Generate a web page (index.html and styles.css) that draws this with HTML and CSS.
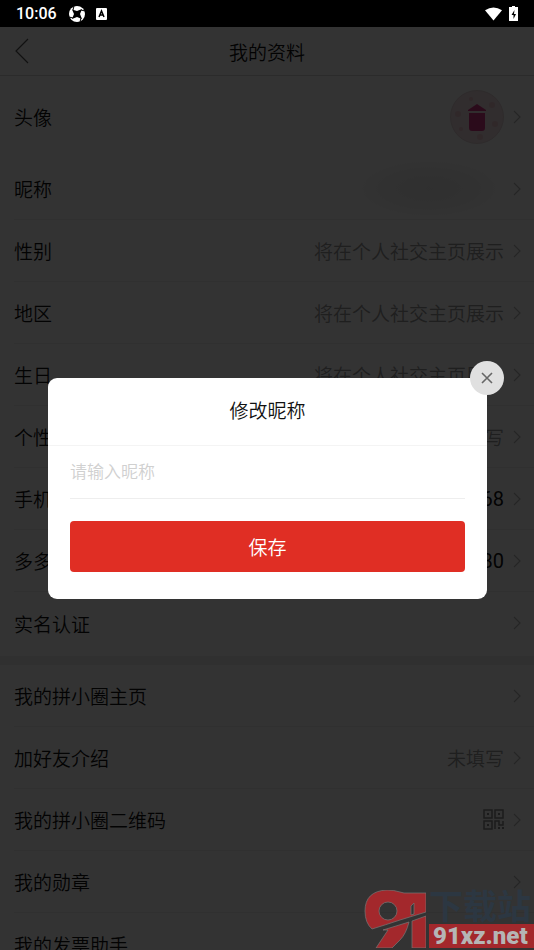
FILE: index.html
```html
<!DOCTYPE html>
<html lang="zh-CN">
<head>
<meta charset="utf-8">
<meta name="viewport" content="width=device-width, initial-scale=1">
<title>我的资料</title>
<link rel="stylesheet" href="styles.css">
</head>
<body>
<svg class="sprite" aria-hidden="true">
  <symbol id="chevron" viewBox="0 0 8 14"><path d="M1 1l6 6-6 6" fill="none" stroke="currentColor" stroke-width="1.2"/></symbol>
</svg>
<div class="status">
  <span class="time">10:06</span>
  <svg class="status-app" viewBox="0 0 16 16" aria-hidden="true"><circle cx="8" cy="8" r="8" fill="#fff"/><path d="M3 3.500L8 5l5-2-2 5 2 5-5-2-5 2 2-5z" fill="#000"/><path d="M5 0L4 4M16 5l-4-1M11 16l1-4M0 11l4 1" stroke="#000" stroke-width="1"/></svg>
  <svg class="status-a" viewBox="0 0 11 12" aria-hidden="true"><rect width="11" height="12" rx="1" fill="#fff"/><path d="M3 9l2.500-6L8 9M4 7h3" fill="none" stroke="#000" stroke-width="1.500"/></svg>
  <svg class="status-wifi" viewBox="0 0 18 14" aria-hidden="true"><path d="M0 3Q9-3 18 3L9 14z" fill="#fff"/></svg>
  <svg class="status-battery" viewBox="0 0 9 15" aria-hidden="true"><path d="M0 1h3V0h3v1h3v14H0z" fill="#fff"/><path d="M5.500 4L2.500 9h2v4l2.500-5H5z" fill="#000"/></svg>
</div>
<div class="screen">
  <header class="header">
    <button class="back" aria-label="返回"><svg viewBox="0 0 14 26"><path d="M13 1L1 13l12 12" fill="none" stroke="currentColor" stroke-width="1.200"/></svg></button>
    <h1>我的资料</h1>
  </header>
  <main>
    <ul class="group first">
      <li class="row avatar-row"><span class="label">头像</span>
        <svg class="avatar" viewBox="0 0 54 54" aria-hidden="true"><circle cx="27" cy="27" r="26.500" fill="#f3dfe3" stroke="#e4d4d7"/><g fill="#edc6ce"><circle cx="8" cy="24" r="3"/><circle cx="42" cy="15" r="3"/><circle cx="45" cy="34" r="3"/><circle cx="30" cy="47" r="3"/><circle cx="21" cy="9" r="2"/><circle cx="11" cy="39" r="2"/></g><path d="M18 20l9-6 9 6v1H18zM19 23h16v15q0 3-3 3H22q-3 0-3-3z" fill="#d83a88"/></svg>
        <svg class="chevron"><use href="#chevron"/></svg></li>
      <li class="row"><span class="label">昵称</span><span class="blurred"></span><svg class="chevron"><use href="#chevron"/></svg></li>
      <li class="row"><span class="label">性别</span><span class="hint">将在个人社交主页展示</span><svg class="chevron"><use href="#chevron"/></svg></li>
      <li class="row"><span class="label">地区</span><span class="hint">将在个人社交主页展示</span><svg class="chevron"><use href="#chevron"/></svg></li>
      <li class="row"><span class="label">生日</span><span class="hint">将在个人社交主页展示</span><svg class="chevron"><use href="#chevron"/></svg></li>
      <li class="row"><span class="label">个性</span><span class="hint">写</span><svg class="chevron"><use href="#chevron"/></svg></li>
      <li class="row"><span class="label">手机</span><span class="value">68</span><svg class="chevron"><use href="#chevron"/></svg></li>
      <li class="row"><span class="label">多多</span><span class="value">80</span><svg class="chevron"><use href="#chevron"/></svg></li>
      <li class="row"><span class="label">实名认证</span><svg class="chevron"><use href="#chevron"/></svg></li>
    </ul>
    <ul class="group">
      <li class="row"><span class="label">我的拼小圈主页</span><svg class="chevron"><use href="#chevron"/></svg></li>
      <li class="row"><span class="label">加好友介绍</span><span class="hint">未填写</span><svg class="chevron"><use href="#chevron"/></svg></li>
      <li class="row"><span class="label">我的拼小圈二维码</span>
        <svg class="qr" viewBox="0 0 21 21" aria-hidden="true"><path d="M1 1h8v8H1zM12 1h8v8h-8zM1 12h8v8H1zM12 20v-8h4v4h4v-4" fill="none" stroke="currentColor" stroke-width="1.500"/><path d="M4 4h2v2H4zM15 4h2v2h-2zM4 15h2v2H4zM15 18h2v2h-2zM19 18h2v2h-2z" fill="currentColor"/></svg>
        <svg class="chevron"><use href="#chevron"/></svg></li>
      <li class="row"><span class="label">我的勋章</span><svg class="chevron"><use href="#chevron"/></svg></li>
      <li class="row"><span class="label">我的发票助手</span></li>
    </ul>
  </main>
  <div class="overlay">
    <form class="dialog" role="dialog" aria-labelledby="dialog-title">
      <h2 id="dialog-title">修改昵称</h2>
      <div class="dialog-body">
        <input class="nickname" type="text" placeholder="请输入昵称" aria-label="昵称">
        <button class="save" type="button">保存</button>
      </div>
      <button class="close" type="button" aria-label="关闭"><svg viewBox="0 0 12 12"><path d="M1 1l10 10M11 1L1 11" stroke="currentColor" stroke-width="1.600"/></svg></button>
    </form>
  </div>
  <div class="watermark">
    <svg viewBox="0 0 62 58" aria-hidden="true"><g fill="#a3282c" stroke="#777" stroke-width=".7"><path d="M62 3H40L36 2Q30 0 23 0 1 1 1 21q0 12 7 18 13-4 28-9l26-8zM24 12a9 9 0 1 1 0 18 9 9 0 0 1 0-18z" fill-rule="evenodd"/><path d="M62 26v32H48V31zM45 32q-3 12-9 18l-8 8H12l12-18h-5z"/></g><path d="M47 25v-9l3-3v11z" fill="#333" stroke="#777" stroke-width=".7"/></svg>
    <div class="mark-text"><span class="mark-name">下载站</span><span class="mark-url">91xz.net</span></div>
  </div>
</div>
</body>
</html>
```

FILE: styles.css
```css
* { box-sizing: border-box; }
body {
  margin: 0;
  height: 100vh;
  display: flex;
  flex-direction: column;
  overflow: hidden;
  font-family: Roboto, "Noto Sans CJK SC", sans-serif;
  font-size: 19px;
  font-weight: 350;
  color: #111;
}
button { border: 0; padding: 0; font: inherit; }
svg { display: block; flex: none; }
h1, h2 { margin: 0; font-size: 19px; font-weight: 350; text-align: center; }
.sprite { display: none; }
.status {
  display: flex;
  align-items: center;
  height: 27px;
  flex: none;
  padding: 0 16px;
  background: #000;
  color: #fff;
}
.time { font-size: 16px; font-weight: 500; margin-right: 12px; }
.status-app { width: 16px; height: 16px; margin-right: 11px; }
.status-a { width: 11px; height: 12px; }
.status-wifi { width: 17px; height: 14px; margin-left: auto; margin-right: 7px; }
.status-battery { width: 9px; height: 15px; }
.screen { position: relative; flex: 1; min-height: 0; overflow: hidden; background: #fff; }
.header {
  display: grid;
  grid-template-columns: 48px 1fr 48px;
  align-items: center;
  height: 49px;
  border-bottom: 1px solid #d4d4d4;
}
.back { background: none; padding-left: 15px; color: #555; }
.back svg { width: 14px; height: 26px; }
.group { list-style: none; margin: 0; padding: 0; }
.first { padding-bottom: 2px; border-bottom: 9px solid #efefef; box-sizing: content-box; }
.row {
  display: flex;
  align-items: center;
  height: 62px;
  margin-left: 14px;
  padding-right: 13px;
  border-bottom: 1px solid #f0f0f0;
}
.row:last-child { border-bottom: 0; }
.avatar-row { height: 82px; border-bottom-color: #fff; }
.label { margin-right: auto; }
.hint { color: #999; }
.value { font-size: 20px; font-weight: 400; }
.chevron { width: 8px; height: 14px; margin-left: 9px; color: #bbb; }
.avatar { width: 54px; height: 54px; }
.blurred {
  width: 150px;
  height: 61px;
  background: radial-gradient(closest-side, #ececec, #f4f4f4 60%, #fff);
}
.qr { width: 21px; height: 21px; color: #888; }
.overlay {
  position: absolute;
  inset: 0;
  display: flex;
  align-items: center;
  padding: 0 47px 0 48px;
  background: rgba(0, 0, 0, .8);
}
.dialog { position: relative; flex: 1; background: #fff; border-radius: 9px; }
.dialog h2 { line-height: 67px; border-bottom: 1px solid #f4f4f4; }
.dialog-body { display: flex; flex-direction: column; gap: 22px; padding: 0 22px 27px; }
.nickname {
  width: 100%;
  height: 53px;
  border: 0;
  border-bottom: 1px solid #eee;
  padding: 0;
  outline: 0;
  font: inherit;
  font-size: 17px;
  background: none;
}
.nickname::placeholder { color: #d0d0d0; opacity: 1; }
.save { height: 51px; border-radius: 4px; background: #e02e24; color: #fff; }
.close {
  position: absolute;
  top: -17px;
  right: -17px;
  display: grid;
  place-items: center;
  width: 34px;
  height: 34px;
  border-radius: 50%;
  background: #e0e0e0;
  color: #666;
}
.close svg { width: 12px; height: 12px; }
.watermark { position: absolute; right: 0; bottom: 2px; display: flex; gap: 3px; align-items: flex-end; }
.watermark svg { width: 62px; height: 58px; }
.mark-text { width: 105px; }
.mark-name { display: block; font-size: 34px; line-height: 34px; font-weight: 700; color: #2c3742; }
.mark-url {
  display: block;
  padding-left: 4px;
  font-size: 24px;
  line-height: 24px;
  font-weight: 900;
  color: #b5b5b5;
  background: #a3282c;
}
```
